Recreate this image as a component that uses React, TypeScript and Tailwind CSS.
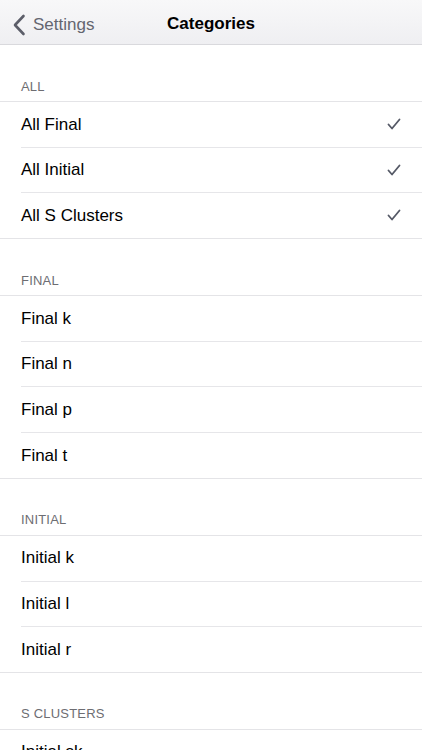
import React from "react";

type Section = { title: string; items: { label: string; checked?: boolean }[] };

const sections: Section[] = [
  {
    title: "All",
    items: [
      { label: "All Final", checked: true },
      { label: "All Initial", checked: true },
      { label: "All S Clusters", checked: true },
    ],
  },
  {
    title: "Final",
    items: [{ label: "Final k" }, { label: "Final n" }, { label: "Final p" }, { label: "Final t" }],
  },
  {
    title: "Initial",
    items: [{ label: "Initial k" }, { label: "Initial l" }, { label: "Initial r" }],
  },
  {
    title: "S Clusters",
    items: [{ label: "Initial sk" }, { label: "Initial sl" }, { label: "Initial sm" }],
  },
];

const Check = () => (
  <svg width="14" height="13" viewBox="0 0 14 13" className="text-[#555966]">
    <path d="M1.5 6.5 L5 10.5 L12.5 1.5" fill="none" stroke="currentColor" strokeWidth="1.8" strokeLinecap="round" strokeLinejoin="round" />
  </svg>
);

const App = () => {
  return (
    <div className="w-[422px] h-[750px] overflow-hidden bg-white font-['Liberation_Sans',Arial,sans-serif]">
      <div className="h-[45px] relative flex items-center justify-center pt-[3px] bg-gradient-to-b from-[#f8f8f9] to-[#efeff2] border-b border-[#d9d9dd]">
        <div className="absolute left-[12px] top-[3px] h-[44px] flex items-center gap-[7px] text-[#646670]">
          <svg width="14" height="22" viewBox="0 0 14 22">
            <path d="M11.5 2 L3 11 L11.5 20" fill="none" stroke="#5c5e69" strokeWidth="2.6" strokeLinecap="round" strokeLinejoin="round" />
          </svg>
          <span className="text-[17px]">Settings</span>
        </div>
        <span className="text-[17px] font-bold text-black">Categories</span>
      </div>

      <div className="flex flex-col">
        {sections.map((s) => (
          <div key={s.title} className="flex flex-col">
            <div className="h-[56px] flex items-end pb-[5px] px-[21px]">
              <span className="text-[13px] uppercase text-[#6d6d72] tracking-[0.2px]">{s.title}</span>
            </div>
            <div className="border-t border-b border-[#e4e4e7]">
              {s.items.map((it, i) => (
                <div key={it.label} className="pl-[21px]">
                  <div
                    className={`h-[44.7px] flex items-center justify-between pr-[21px] ${
                      i < s.items.length - 1 ? "border-b border-[#e6e6e9] box-content" : ""
                    }`}
                  >
                    <span className="text-[17px] text-black">{it.label}</span>
                    {it.checked && <Check />}
                  </div>
                </div>
              ))}
            </div>
          </div>
        ))}
      </div>
    </div>
  );
};

export default App;
